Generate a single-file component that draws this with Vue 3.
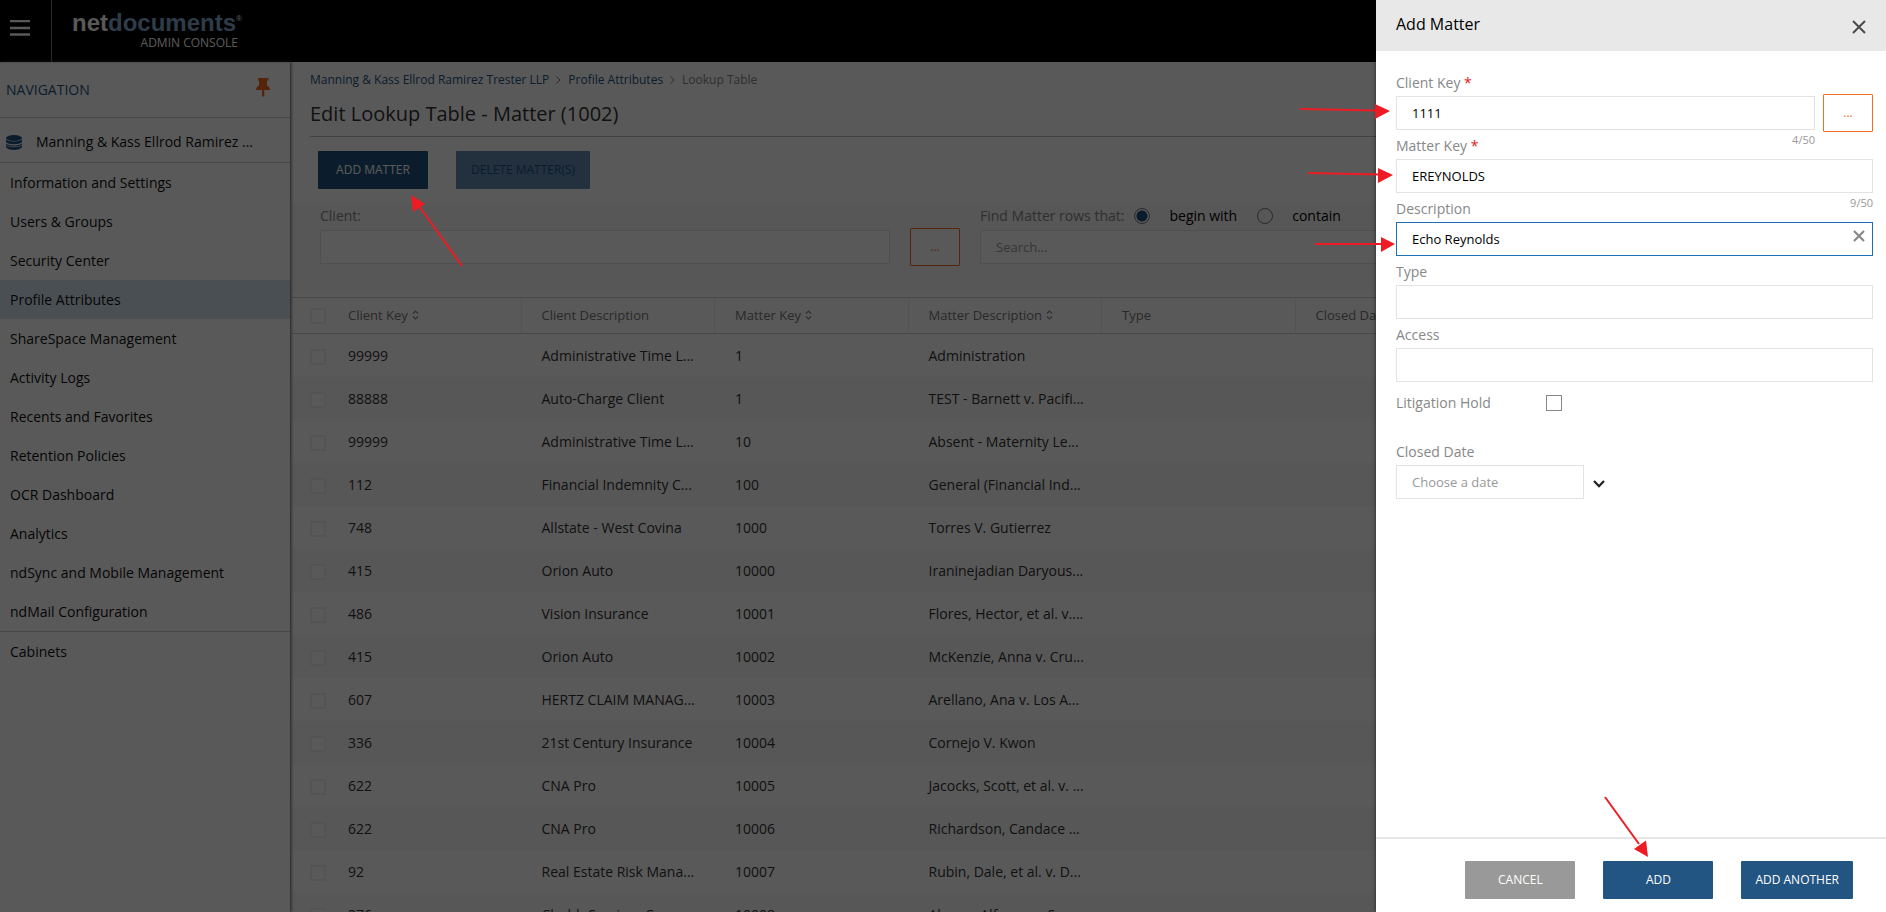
<script setup>
import { ref } from 'vue'

const navItems = [
  'Information and Settings',
  'Users & Groups',
  'Security Center',
  'Profile Attributes',
  'ShareSpace Management',
  'Activity Logs',
  'Recents and Favorites',
  'Retention Policies',
  'OCR Dashboard',
  'Analytics',
  'ndSync and Mobile Management',
  'ndMail Configuration'
]
const activeItem = 'Profile Attributes'

const columns = [
  { label: 'Client Key', sortable: true },
  { label: 'Client Description', sortable: false },
  { label: 'Matter Key', sortable: true },
  { label: 'Matter Description', sortable: true },
  { label: 'Type', sortable: false },
  { label: 'Closed Date', sortable: false }
]

const rows = [
  ['99999', 'Administrative Time L...', '1', 'Administration'],
  ['88888', 'Auto-Charge Client', '1', 'TEST - Barnett v. Pacifi...'],
  ['99999', 'Administrative Time L...', '10', 'Absent - Maternity Le...'],
  ['112', 'Financial Indemnity C...', '100', 'General (Financial Ind...'],
  ['748', 'Allstate - West Covina', '1000', 'Torres V. Gutierrez'],
  ['415', 'Orion Auto', '10000', 'Iraninejadian Daryous...'],
  ['486', 'Vision Insurance', '10001', 'Flores, Hector, et al. v....'],
  ['415', 'Orion Auto', '10002', 'McKenzie, Anna v. Cru...'],
  ['607', 'HERTZ CLAIM MANAG...', '10003', 'Arellano, Ana v. Los A...'],
  ['336', '21st Century Insurance', '10004', 'Cornejo V. Kwon'],
  ['622', 'CNA Pro', '10005', 'Jacocks, Scott, et al. v. ...'],
  ['622', 'CNA Pro', '10006', 'Richardson, Candace ...'],
  ['92', 'Real Estate Risk Mana...', '10007', 'Rubin, Dale, et al. v. D...'],
  ['376', 'Chubb Services Cor...', '10008', 'Alonso, Alfonso v. S...']
]

const matchMode = ref('begin')
const clientKey = ref('1111')
const matterKey = ref('EREYNOLDS')
const description = ref('Echo Reynolds')
const type = ref('')
const access = ref('')
</script>

<template>
  <div class="app">
    <header class="topbar">
      <button class="menu" aria-label="Menu">
        <svg width="20" height="16" viewBox="0 0 20 16"><path d="M0 1h20M0 8h20M0 14.500h20" stroke="#fff" stroke-width="2.400" /></svg>
      </button>
      <div class="brand">
        <div class="logo">net<span class="logo-docs">documents</span><span class="logo-reg">®</span></div>
        <div class="console">ADMIN CONSOLE</div>
      </div>
    </header>

    <div class="body">
      <nav class="sidebar">
        <div class="nav-head">
          <span>NAVIGATION</span>
          <button class="pin" aria-label="Pin navigation">
            <svg width="14" height="19" viewBox="0 0 14 19"><path d="M2 0h10.500v2.500h-1.500v5c1.800.8 3 2.300 3 4.500H8.300v6L7.200 19 6 18v-6H0c0-2.200 1.200-3.700 3-4.500v-5H2z" fill="#f26c21" /></svg>
          </button>
        </div>
        <a class="org" href="#">
          <svg width="16" height="15" viewBox="0 0 16 15">
            <g fill="#225582">
              <ellipse cx="8" cy="3" rx="8" ry="3" />
              <path d="M0 4.600C2 7 14 7 16 4.600V7c-2 3-14 3-16 0z" />
              <path d="M0 8.600C2 11 14 11 16 8.600V12c-2 4-14 4-16 0z" />
            </g>
            <path d="M0 9.800c2 2.600 14 2.600 16 0" fill="none" stroke="#fff" stroke-width="0.700" />
          </svg>
          <span>Manning &amp; Kass Ellrod Ramirez ...</span>
        </a>
        <ul class="nav-list">
          <li v-for="item in navItems" :key="item">
            <a href="#" :class="{ active: item === activeItem }">{{ item }}</a>
          </li>
        </ul>
        <a class="cabinets" href="#">Cabinets</a>
      </nav>

      <main class="main">
        <div class="heading">
          <div class="crumbs">
            <a href="#">Manning &amp; Kass Ellrod Ramirez Trester LLP</a>
            <svg width="5" height="8" viewBox="0 0 5 8"><path d="M.5.5 4 4 .5 7.500" fill="none" stroke="#777" /></svg>
            <a href="#">Profile Attributes</a>
            <svg width="5" height="8" viewBox="0 0 5 8"><path d="M.5.5 4 4 .5 7.500" fill="none" stroke="#777" /></svg>
            <span>Lookup Table</span>
          </div>
          <h1>Edit Lookup Table - Matter (1002)</h1>
        </div>
        <div class="actions">
          <button class="btn primary">ADD MATTER</button>
          <button class="btn faded" disabled>DELETE MATTER(S)</button>
        </div>
        <div class="filters">
          <div class="filter">
            <div class="filter-label"><label for="client">Client:</label></div>
            <input id="client" class="text" type="text" />
          </div>
          <button class="lookup" aria-label="Look up client">...</button>
          <div class="filter">
            <div class="filter-label">
              <label for="search">Find Matter rows that:</label>
              <label class="option"><input v-model="matchMode" type="radio" name="match" value="begin" />begin with</label>
              <label class="option"><input v-model="matchMode" type="radio" name="match" value="contain" />contain</label>
            </div>
            <input id="search" class="text" type="text" placeholder="Search..." />
          </div>
        </div>
        <table class="grid">
          <colgroup>
            <col class="check-col" />
            <col v-for="n in 8" :key="n" />
          </colgroup>
          <thead>
            <tr>
              <th class="check"><input type="checkbox" aria-label="Select all rows" /></th>
              <th v-for="col in columns" :key="col.label" scope="col">
                {{ col.label }}<svg v-if="col.sortable" class="sort" width="7" height="10" viewBox="0 0 7 10"><path d="M1 3.500 3.500 1 6 3.500M1 6.500 3.500 9 6 6.500" fill="none" stroke="#888" stroke-width="1.200" /></svg>
              </th>
              <td colspan="2"></td>
            </tr>
          </thead>
          <tbody>
            <tr v-for="row in rows" :key="row[2] + row[3]">
              <td class="check"><input type="checkbox" :aria-label="'Select ' + row[3]" /></td>
              <td v-for="(cell, i) in row" :key="i">{{ cell }}</td>
              <td colspan="4"></td>
            </tr>
          </tbody>
        </table>
      </main>
    </div>

    <div class="backdrop"></div>

    <aside class="drawer" role="dialog" aria-labelledby="drawer-title">
      <header class="drawer-head">
        <h2 id="drawer-title">Add Matter</h2>
        <button class="close" aria-label="Close">
          <svg width="14" height="14" viewBox="0 0 14 14"><path d="M1 1l12 12M13 1 1 13" stroke="#4a4a4a" stroke-width="2" /></svg>
        </button>
      </header>
      <form class="form" @submit.prevent>
        <div class="with-lookup">
          <div class="field">
            <label for="client-key">Client Key <b>*</b></label>
            <input id="client-key" v-model="clientKey" class="text" type="text" maxlength="50" />
            <span class="count">{{ clientKey.length }}/50</span>
          </div>
          <button type="button" class="lookup" aria-label="Look up client key">...</button>
        </div>
        <div class="field">
          <label for="matter-key">Matter Key <b>*</b></label>
          <input id="matter-key" v-model="matterKey" class="text" type="text" maxlength="50" />
          <span class="count">{{ matterKey.length }}/50</span>
        </div>
        <div class="field">
          <label for="description">Description</label>
          <input id="description" v-model="description" class="text focused" type="text" />
          <button type="button" class="clear" aria-label="Clear description" @click="description = ''">
            <svg width="12" height="12" viewBox="0 0 12 12"><path d="M1 1l10 10M11 1 1 11" stroke="#888" stroke-width="2.200" /></svg>
          </button>
        </div>
        <div class="field">
          <label for="type">Type</label>
          <input id="type" v-model="type" class="text" type="text" />
        </div>
        <div class="field">
          <label for="access">Access</label>
          <input id="access" v-model="access" class="text" type="text" />
        </div>
        <div class="hold">
          <label for="hold">Litigation Hold</label>
          <input id="hold" type="checkbox" />
        </div>
        <div class="field">
          <label for="closed-date">Closed Date</label>
          <div class="date">
            <input id="closed-date" class="text" type="text" placeholder="Choose a date" />
            <button type="button" class="chevron" aria-label="Open calendar">
              <svg width="12" height="8" viewBox="0 0 12 8"><path d="M1 1l5 5.200L11 1" fill="none" stroke="#222" stroke-width="2.300" /></svg>
            </button>
          </div>
        </div>
      </form>
      <footer class="drawer-foot">
        <button class="btn cancel">CANCEL</button>
        <button class="btn primary">ADD</button>
        <button class="btn primary">ADD ANOTHER</button>
      </footer>
      <svg class="note fields-note" width="96" height="160" viewBox="0 0 96 160">
        <g stroke="#ed1c24" stroke-width="2" fill="#ed1c24">
          <path d="M4 13l76 1.600M12 77l72 1.600M19 148h66" />
          <g stroke="none"><path d="M94 15 79 8v15zM97 79 82 72v15zM99 148 85 141v15z" /></g>
        </g>
      </svg>
      <svg class="note add-note" width="46" height="62" viewBox="0 0 46 62">
        <path d="M1 1l34 47" stroke="#ed1c24" stroke-width="2" />
        <path d="M44 61 42 44.500 30 53z" fill="#ed1c24" />
      </svg>
    </aside>

    <svg class="note button-note" width="54" height="74" viewBox="0 0 54 74">
      <path d="M52 72 9 12" stroke="#ed1c24" stroke-width="2" />
      <path d="M1 1l14 9L3 18z" fill="#ed1c24" />
    </svg>
  </div>
</template>

<style>
body {
  margin: 0;
}
</style>

<style scoped>
* {
  box-sizing: border-box;
}

.app {
  position: relative;
  display: flex;
  flex-direction: column;
  height: 100vh;
  overflow: hidden;
  background: #fff;
  color: #333;
  font: 14px/20px "Open Sans", "Noto Sans", sans-serif;
}

button,
input {
  font: inherit;
}

button {
  padding: 0;
  border: 0;
  background: none;
  cursor: pointer;
}

a {
  color: inherit;
  text-decoration: none;
}

svg {
  display: block;
  flex: none;
}

/* Top bar */
.topbar {
  display: flex;
  flex: none;
  height: 62px;
  background: #000;
}

.menu {
  width: 52px;
  padding: 0 10px 6px;
  border-right: 1px solid #777;
}

.brand {
  padding: 8px 0 0 20px;
  color: #fff;
}

.logo {
  display: flex;
  font: bold 24px/30px "Liberation Sans", Arial, sans-serif;
}

.logo-docs {
  color: #84acd0;
}

.logo-reg {
  font-size: 8px;
  line-height: 22px;
  font-weight: normal;
}

.console {
  margin-top: -3px;
  padding-right: 4px;
  font-size: 12px;
  font-weight: 500;
  line-height: 16px;
  text-align: right;
}

.body {
  display: flex;
  flex: 1;
  min-height: 0;
}

/* Sidebar */
.sidebar {
  z-index: 1;
  flex: none;
  width: 290px;
  border-top: 1px solid #ddd;
  box-shadow: 1px 0 3px #555;
  color: #111;
}

.nav-head {
  display: flex;
  justify-content: space-between;
  height: 55px;
  padding: 15px 20px 0 6px;
  border-bottom: 1px solid #ccc;
  color: #225582;
}

.nav-head span {
  padding-top: 2px;
}

.pin {
  height: 19px;
}

.org {
  display: flex;
  align-items: center;
  gap: 14px;
  height: 45px;
  padding: 4px 6px 0;
  border-bottom: 1px solid #ccc;
}

.nav-list {
  margin: 0;
  padding: 0;
  border-bottom: 1px solid #ccc;
  list-style: none;
}

.nav-list a,
.cabinets {
  display: block;
  padding: 10px 10px 9px;
}

.nav-list .active {
  background: #d5e1ee;
}

/* Main page */
.main {
  flex: 1;
  min-width: 0;
  padding-left: 1px;
}

.heading {
  margin: 0 13px 0 19px;
  border-bottom: 1px solid #bbb;
}

.crumbs {
  display: flex;
  align-items: center;
  gap: 7px;
  padding-top: 8px;
  font-size: 12px;
  color: #888;
}

.crumbs a {
  color: #225582;
}

h1 {
  margin: 10px 0 8px;
  font-size: 20px;
  line-height: 28px;
  font-weight: normal;
}

.actions {
  display: flex;
  gap: 28px;
  padding: 14px 27px;
}

.btn {
  min-width: 110px;
  height: 38px;
  padding: 0 14px;
  border-radius: 1px;
  color: #fff;
  font-size: 12px;
  font-weight: 500;
}

.primary {
  background: #225582;
}

.cancel {
  background: #999;
}

.faded {
  padding: 0 15px;
  background: #648bb0;
  color: #225582;
  font-weight: normal;
}

.filters {
  display: flex;
  align-items: flex-end;
  gap: 20px;
  height: 89px;
  padding: 0 13px 28px 29px;
  background: #f8f8f8;
}

.filter {
  width: 570px;
}

.filter:last-child {
  flex: 1;
}

.filter-label {
  display: flex;
  align-items: center;
  height: 24px;
  margin-bottom: 2px;
  color: #888;
}

.option {
  display: flex;
  align-items: center;
  margin-left: 10px;
  color: #000;
}

.option + .option {
  margin-left: 20px;
}

.option input {
  appearance: none;
  width: 16px;
  height: 16px;
  margin: 0 19px 0 0;
  border: 1px solid #777;
  border-radius: 50%;
}

.option input:checked {
  background: radial-gradient(circle, #225582 5px, transparent 6px);
}

.text {
  display: block;
  width: 100%;
  height: 34px;
  padding: 0 15px;
  border: 1px solid #e3e3e3;
  outline: 0;
  background: #fff;
  color: #000;
  font-size: 13px;
}

.text::placeholder {
  color: #999;
  opacity: 1;
}

.lookup {
  flex: none;
  width: 50px;
  height: 38px;
  margin-bottom: -2px;
  border: 1px solid #f26c21;
  border-radius: 1px;
  background: #fff;
  color: #f26c21;
  font-size: 12px;
  font-weight: 500;
}

.grid {
  width: calc(100% - 10px);
  margin-top: 5px;
  border-collapse: separate;
  border-spacing: 0;
  table-layout: fixed;
}

.check-col {
  width: 37px;
}

.grid thead > tr > * {
  height: 37px;
  border: solid #d0d0d0;
  border-width: 1px 0;
}

.grid th {
  padding: 0 20px 2px;
  text-align: left;
  color: #777;
  font-size: 13px;
  font-weight: normal;
  white-space: nowrap;
}

.grid thead th + th {
  background: linear-gradient(#eee, #eee) right / 1px 100% no-repeat;
}

.grid td {
  height: 43px;
  padding: 0 20px;
  white-space: nowrap;
}

.grid .check {
  padding: 0 0 0 19px;
}

.grid tbody tr:nth-child(even) {
  background: #f8f8f8;
}

.grid input {
  display: block;
  appearance: none;
  width: 16px;
  height: 16px;
  margin: 0;
  border: 2px solid #f0f0f0;
  background: #fff;
}

.grid tbody input {
  margin-top: 3px;
}

.sort {
  display: inline-block;
  margin-left: 4px;
}

.backdrop {
  position: absolute;
  inset: 0;
  z-index: 2;
  background: rgba(0, 0, 0, 0.65);
}

/* Add Matter drawer */
.drawer {
  position: absolute;
  inset: 0 0 0 auto;
  z-index: 3;
  display: flex;
  flex-direction: column;
  width: 510px;
  background: #fff;
  box-shadow: 0 0 4px rgba(0, 0, 0, 0.6);
}

.drawer-head {
  display: flex;
  justify-content: space-between;
  height: 51px;
  padding: 12px 20px;
  background: #e8e8e8;
}

h2 {
  margin: 0;
  color: #000;
  font-size: 16px;
  line-height: 24px;
  font-weight: normal;
}

.close {
  height: 30px;
}

.form {
  flex: 1;
  padding: 16px 13px 0 20px;
  color: #888;
}

.with-lookup {
  display: flex;
  align-items: flex-end;
  gap: 8px;
}

.field {
  position: relative;
  flex: 1;
}

.field label {
  display: block;
  padding: 6px 0 3px;
}

.field label b {
  color: #e02020;
  font-weight: 500;
}

.count {
  position: absolute;
  top: 100%;
  right: 0;
  color: #999;
  font-size: 11px;
}

.focused {
  border-color: #1f6fb5;
}

.clear {
  position: absolute;
  right: 8px;
  bottom: 14px;
}

.hold {
  display: flex;
  align-items: center;
  height: 42px;
  margin-bottom: 12px;
}

.hold label {
  width: 150px;
}

.hold input {
  appearance: none;
  width: 16px;
  height: 16px;
  margin: 0;
  border: 1px solid #888;
}

.date {
  display: flex;
  align-items: center;
  gap: 9px;
}

.date .text {
  width: 188px;
}

.chevron {
  padding-top: 4px;
}

.drawer-foot {
  display: flex;
  justify-content: flex-end;
  gap: 28px;
  padding: 22px 33px 13px;
  border-top: 2px solid #e6e6e6;
}

/* Red pointer arrows over the page */
.note {
  position: absolute;
  z-index: 4;
  overflow: visible;
  pointer-events: none;
}

.fields-note {
  top: 96px;
  left: -80px;
}

.add-note {
  right: 236px;
  bottom: 54px;
}

.button-note {
  top: 194px;
  left: 410px;
}
</style>
